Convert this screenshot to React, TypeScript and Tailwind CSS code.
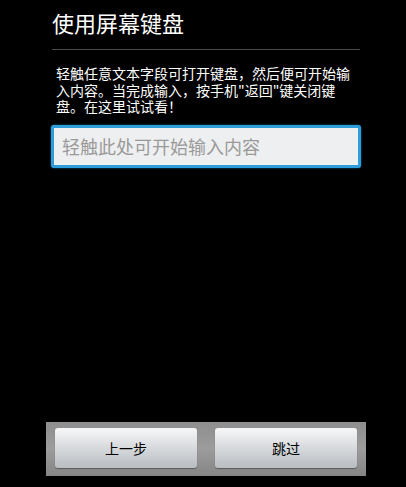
import React from "react";

const cjk = { fontFamily: '"Noto Sans CJK SC", "Noto Sans", sans-serif' };

export default function App() {
  return (
    <div className="flex h-[487px] w-[406px] flex-col bg-black" style={cjk}>
      {/* title */}
      <div className="ml-[52px] w-[308px]">
        <h1 className="pt-[7px] text-[22px] leading-[30px] text-white">使用屏幕键盘</h1>
        <div className="mt-[12px] h-px bg-[#4a4a4a]" />
      </div>

      {/* body */}
      <div className="ml-[56px] mt-[15px] whitespace-nowrap text-[14px] leading-[16.5px] text-white">
        <div>轻触任意文本字段可打开键盘，然后便可开始输</div>
        <div>入内容。当完成输入，按手机"返回"键关闭键</div>
        <div>盘。在这里试试看！</div>
      </div>

      <div className="ml-[51px] mt-[10px] h-[43px] w-[310px] rounded-[3px] border-[3px] border-[#2d9ddb] bg-[#eeeff0] shadow-[0_0_2px_#1a6fa8]">
        <div className="pl-[8px] text-[18px] leading-[36px] text-[#9a9a9a]">轻触此处可开始输入内容</div>
      </div>

      {/* bottom bar */}
      <div className="mb-[11px] ml-[46px] mt-auto flex h-[54px] w-[320px] gap-[18px] bg-gradient-to-b from-[#8e8e8e] via-[#9c9c9c] to-[#858585] pb-[8px] pl-[9px] pr-[9px] pt-[6px]">
        <button className="flex-1 rounded-[3px] bg-gradient-to-b from-[#f6f7f8] to-[#b8bdc2] text-[14px] text-black shadow-[0_1px_1px_rgba(0,0,0,0.35)]">
          上一步
        </button>
        <button className="flex-1 rounded-[3px] bg-gradient-to-b from-[#f6f7f8] to-[#b8bdc2] text-[14px] text-black shadow-[0_1px_1px_rgba(0,0,0,0.35)]">
          跳过
        </button>
      </div>
    </div>
  );
}
